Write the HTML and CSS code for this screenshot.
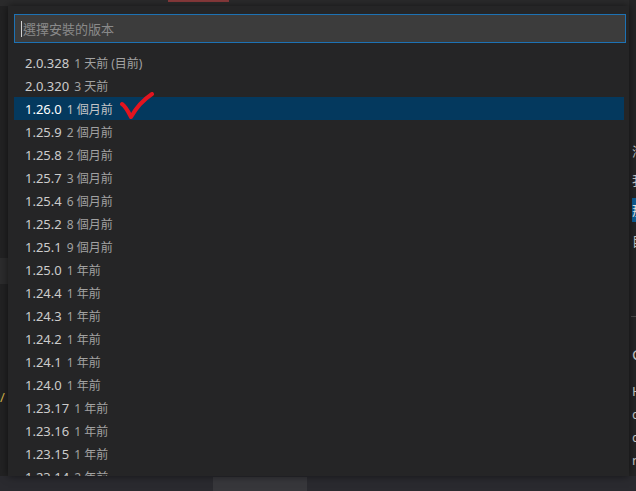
FILE: index.html
```html
<!DOCTYPE html>
<html lang="zh-Hant">
<head>
<meta charset="utf-8">
<link rel="stylesheet" href="styles.css">
</head>
<body>
<div class="desk">
  <div class="top-strip"><span class="red-tab"></span></div>
  <div class="left-block"></div>
  <div class="left-mark">/</div>
  <div class="right-col">
    <span class="rt r1">海</span>
    <span class="rt r2">我</span>
    <span class="rt r3 sel">那</span>
    <span class="rt r4">目</span>
    <span class="rule"></span>
    <span class="rt r5">C</span>
    <span class="rt r6">H</span>
    <span class="rt r7">c</span>
    <span class="rt r8">c</span>
    <span class="rt r9">n</span>
  </div>
  <div class="bottom-strip"><span class="btn-ghost"></span></div>

  <div class="picker">
    <div class="input"><span class="caret"></span><span class="ph">選擇安裝的版本</span></div>
    <ul class="list">
      <li><span class="v">2.0.328</span><span class="d">1 天前 (目前)</span></li>
      <li><span class="v">2.0.320</span><span class="d">3 天前</span></li>
      <li class="active"><span class="v">1.26.0</span><span class="d">1 個月前</span>
        <svg class="check" width="48" height="30" viewBox="0 0 48 30"><path d="M14 12 C17 14 20 19 23 25 C28 16 35 8 44 2" fill="none" stroke="#e3141f" stroke-width="4" stroke-linecap="round" stroke-linejoin="round"/></svg>
      </li>
      <li><span class="v">1.25.9</span><span class="d">2 個月前</span></li>
      <li><span class="v">1.25.8</span><span class="d">2 個月前</span></li>
      <li><span class="v">1.25.7</span><span class="d">3 個月前</span></li>
      <li><span class="v">1.25.4</span><span class="d">6 個月前</span></li>
      <li><span class="v">1.25.2</span><span class="d">8 個月前</span></li>
      <li><span class="v">1.25.1</span><span class="d">9 個月前</span></li>
      <li><span class="v">1.25.0</span><span class="d">1 年前</span></li>
      <li><span class="v">1.24.4</span><span class="d">1 年前</span></li>
      <li><span class="v">1.24.3</span><span class="d">1 年前</span></li>
      <li><span class="v">1.24.2</span><span class="d">1 年前</span></li>
      <li><span class="v">1.24.1</span><span class="d">1 年前</span></li>
      <li><span class="v">1.24.0</span><span class="d">1 年前</span></li>
      <li><span class="v">1.23.17</span><span class="d">1 年前</span></li>
      <li><span class="v">1.23.16</span><span class="d">1 年前</span></li>
      <li><span class="v">1.23.15</span><span class="d">1 年前</span></li>
      <li><span class="v">1.23.14</span><span class="d">2 年前</span></li>
    </ul>
  </div>
</div>
</body>
</html>
```

FILE: styles.css
```css
* { box-sizing: border-box; }
html, body { margin: 0; padding: 0; }
body {
  width: 636px;
  height: 491px;
  overflow: hidden;
  background: #1f1f1f;
  font-family: "Noto Sans", "Noto Sans CJK TC", sans-serif;
}
.desk {
  position: relative;
  width: 636px;
  height: 491px;
  background: #222223;
}
.top-strip {
  position: absolute;
  left: 0; top: 0;
  width: 636px; height: 6px;
  background: #2b2b2c;
}
.red-tab {
  position: absolute;
  left: 168px; top: 0;
  width: 61px; height: 2px;
  background: #8a3a3c;
}
.left-block {
  position: absolute;
  left: 0; top: 258px;
  width: 8px; height: 26px;
  background: #2c2c2d;
}
.left-mark {
  position: absolute;
  left: 0; top: 388px;
  color: #d6b64a;
  font-size: 13px;
}
.right-col {
  position: absolute;
  left: 629px; top: 0;
  width: 7px; height: 476px;
  background: #252526;
  overflow: hidden;
  color: #c8c8c8;
  font-size: 13px;
}
.rt { position: absolute; left: 3px; line-height: 16px; }
.r1 { top: 143px; }
.r2 { top: 172px; }
.r3 { top: 201px; }
.sel { background: #0e5d94; color: #e8e8e8; height: 24px; line-height: 24px; top: 198px; }
.r4 { top: 233px; }
.rule { position: absolute; left: 2px; top: 316px; width: 6px; height: 1px; background: #4a4a4a; }
.r5 { top: 346px; font-size: 15px; }
.r6 { top: 383px; }
.r7 { top: 406px; }
.r8 { top: 429px; }
.r9 { top: 452px; }
.bottom-strip {
  position: absolute;
  left: 0; top: 476px;
  width: 636px; height: 15px;
  background: #2a2a2f;
}
.btn-ghost {
  position: absolute;
  left: 213px; top: 1px;
  width: 94px; height: 14px;
  background: #37373b;
}

.picker {
  position: absolute;
  left: 8px; top: 6px;
  width: 621px;
  height: 470px;
  background: #252526;
  box-shadow: 0 0 8px rgba(0,0,0,0.55);
  padding: 8px 3px 0 6px;
  overflow: hidden;
}
.input {
  height: 29px;
  border: 1px solid #1d72b4;
  background: #3c3c3c;
  display: flex;
  align-items: center;
  padding-left: 6px;
  font-size: 13px;
}
.caret {
  width: 1px; height: 16px;
  background: #d0d0d0;
  margin-right: 1px;
}
.ph {
  color: #8a8a8a;
  font-family: "Noto Sans CJK TC", sans-serif;
  font-size: 13px;
}
.list {
  list-style: none;
  margin: 8px 0 0 0;
  padding: 0;
}
.list li {
  position: relative;
  height: 23px;
  display: flex;
  align-items: center;
  padding-left: 11px;
  gap: 5px;
  margin-right: 2px;
}
.v {
  color: #cccccc;
  font-size: 13px;
}
.d {
  color: #a2a2a2;
  font-size: 12px;
  font-family: "Noto Sans", "Noto Sans CJK TC", sans-serif;
}
.list li.active {
  background: #04395e;
}
.list li.active .v { color: #ffffff; }
.list li.active .d { color: #c6c6c6; }
.check {
  position: absolute;
  left: 94px;
  top: -5px;
}
```
